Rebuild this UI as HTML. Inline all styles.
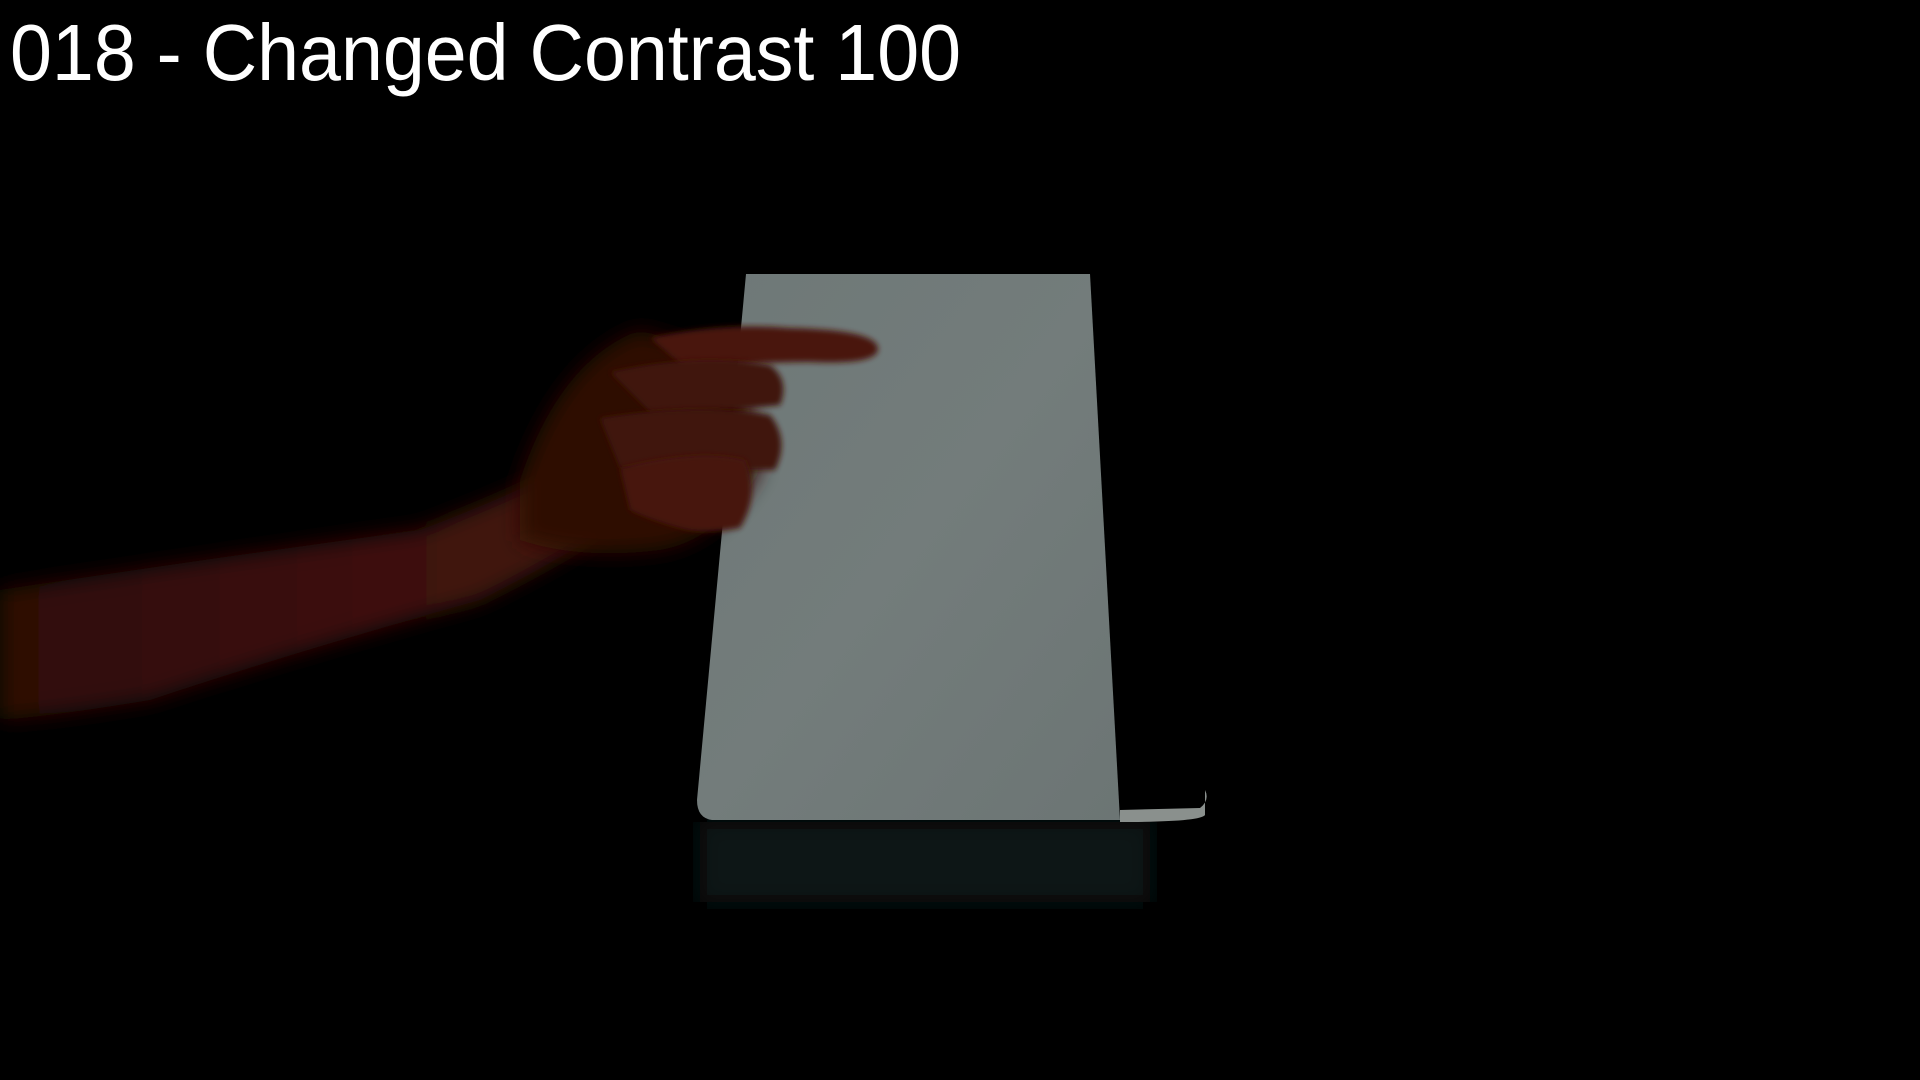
<!DOCTYPE html>
<html><head><meta charset="utf-8"><style>
html,body{margin:0;padding:0;background:#000;width:1920px;height:1080px;overflow:hidden}
.t{position:absolute;left:10px;top:7px;font-family:"Liberation Sans",Arial,sans-serif;font-size:80px;line-height:92px;color:#fff;white-space:nowrap;transform:scaleX(0.942);transform-origin:0 0}
svg{position:absolute;left:0;top:0}
</style></head><body>
<svg width="1920" height="1080" viewBox="0 0 1920 1080">
<defs>
<filter id="b" x="-20%" y="-20%" width="140%" height="140%"><feGaussianBlur stdDeviation="10"/></filter>
<filter id="b2"><feGaussianBlur stdDeviation="3"/></filter>
<linearGradient id="arm" x1="0" y1="0" x2="1" y2="0">
<stop offset="0" stop-color="#2e0c06"/><stop offset="0.5" stop-color="#3a100a"/><stop offset="1" stop-color="#45140c"/></linearGradient>
<linearGradient id="pap" x1="0" y1="0" x2="1" y2="1">
<stop offset="0" stop-color="#6e7877"/><stop offset="0.5" stop-color="#737c7b"/><stop offset="1" stop-color="#6c7574"/></linearGradient>
</defs>
<rect x="700" y="822" width="450" height="80" fill="#111312" filter="url(#b)"/>
<path d="M1120 810 L1200 808 Q1210 800 1205 790 L1205 815 Q1200 822 1120 822Z" fill="#8a908d"/>
<path d="M746 274 L1090 274 L1120 820 L712 820 Q697 818 697 800 Z" fill="url(#pap)"/>
<path d="M0 590 Q200 560 420 530 Q500 500 560 470 L620 520 Q560 560 480 600 Q300 650 150 700 Q60 715 0 720Z" fill="url(#arm)" filter="url(#b)"/>
<path d="M520 480 Q560 360 640 330 L740 360 L760 470 Q720 540 660 550 Q580 560 520 540Z" fill="#2e0b05" filter="url(#b)"/>
<path d="M650 338 Q720 322 790 328 Q880 330 878 350 Q875 365 810 362 Q740 362 690 372Z" fill="#4a160c" filter="url(#b2)"/>
<path d="M610 372 Q700 352 770 365 Q790 380 780 405 Q740 410 650 412Z" fill="#40130a" filter="url(#b2)"/>
<path d="M600 418 Q700 402 770 415 Q790 440 775 470 Q720 470 620 468Z" fill="#3f1309" filter="url(#b2)"/>
<path d="M620 468 Q700 448 745 460 Q760 495 740 528 Q700 535 680 528 Q650 520 630 510Z" fill="#46150b" filter="url(#b2)"/>
</svg>
<div class="t">018 - Changed Contrast 100</div>
</body></html>
